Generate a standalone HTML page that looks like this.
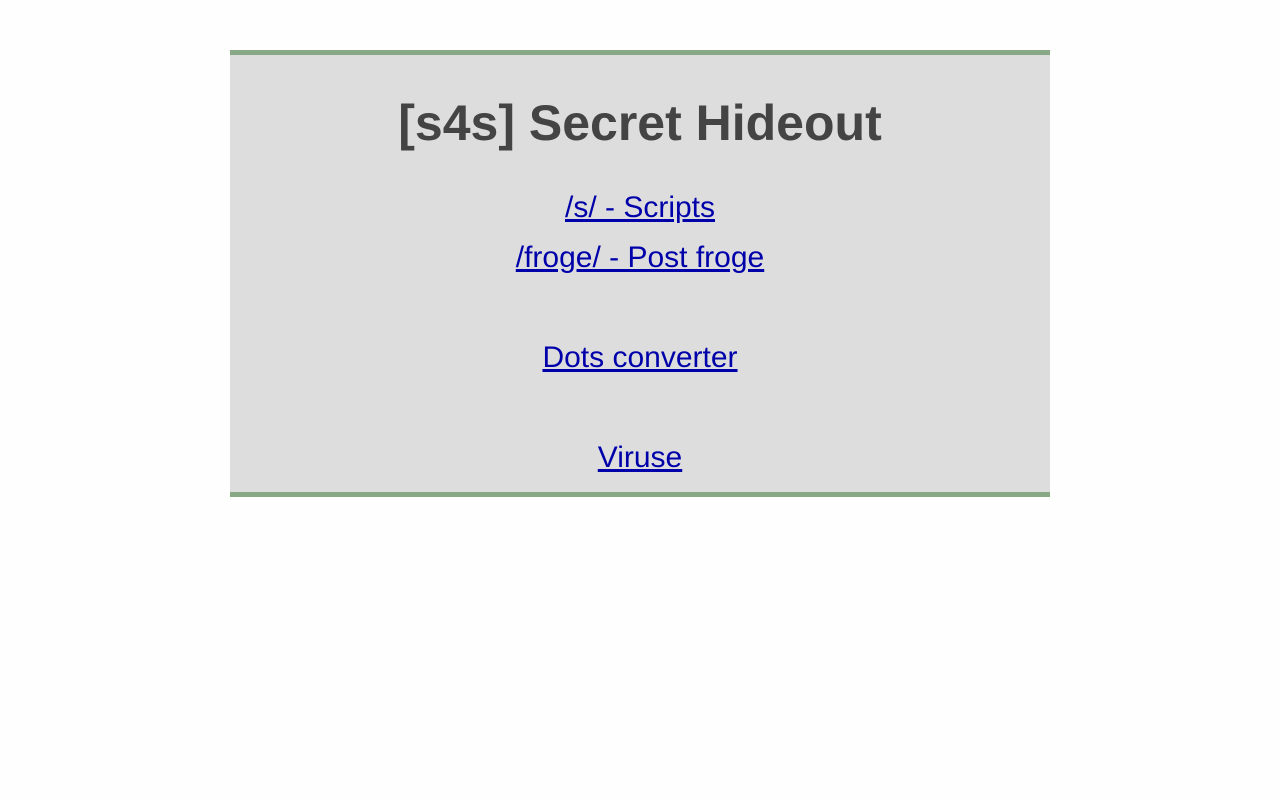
<!DOCTYPE html>
<html><head><style>
html,body{margin:0;padding:0;background:#fefefe;}
body{font-family:"Liberation Sans",sans-serif;}
.box{position:absolute;left:230px;top:50px;width:820px;height:437px;background:#dddddd;border-top:5px solid #88a886;border-bottom:5px solid #88a886;text-align:center;}
h1{position:absolute;left:0;right:0;top:38px;margin:0;font-size:50px;font-weight:bold;color:#444;line-height:60px;}
a{position:absolute;left:0;right:0;color:#0000aa;font-size:30px;line-height:36px;text-decoration:underline;}
a span{color:#0000aa;}
</style></head><body>
<div class="box">
<h1>[s4s] Secret Hideout</h1>
<a style="top:135px"><span>/s/ - Scripts</span></a>
<a style="top:185px"><span>/froge/ - Post froge</span></a>
<a style="top:285px"><span>Dots converter</span></a>
<a style="top:385px"><span>Viruse</span></a>
</div>
</body></html>
